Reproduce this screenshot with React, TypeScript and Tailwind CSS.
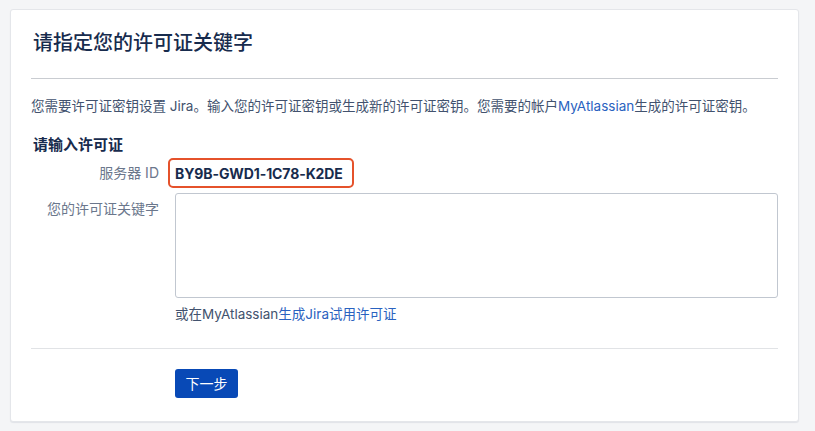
import React from 'react';

const font = "font-['Inter','Noto_Sans_CJK_SC',sans-serif]";

function FieldRow({ label, children, top }: { label: string; children: React.ReactNode; top?: boolean }) {
  return (
    <div className={`flex ${top ? 'items-start' : 'items-center'}`}>
      <label
        className={`w-[128px] shrink-0 text-right text-[14px] leading-[20px] text-[#6b778c] ${top ? 'pt-[6px]' : ''}`}
      >
        {label}
      </label>
      <div className="ml-4 flex-1">{children}</div>
    </div>
  );
}

export default function App() {
  return (
    <div className={`h-[431px] w-[815px] overflow-hidden bg-[#f4f5f7] pt-[9px] ${font}`}>
      <div className="ml-[10px] w-[789px] rounded-[3px] border border-[#e4e6ea] bg-white px-5 pt-[21px] pb-[23px] shadow-[0_1px_1px_rgba(9,30,66,0.08)]">
        <h1 className="pl-[2px] text-[20px] leading-[24px] font-medium text-[#172b4d]">请指定您的许可证关键字</h1>
        <div className="mt-[23px] h-px bg-[#c9ccd1]" />

        <p className="mt-[17px] text-[13.5px] leading-[20px] text-[#42526e]">
          您需要许可证密钥设置 Jira。输入您的许可证密钥或生成新的许可证密钥。您需要的帐户
          <a href="#" className="text-[#2a62c0]">MyAtlassian</a>
          生成的许可证密钥。
        </p>

        <h2 className="mt-[19px] pl-[2px] text-[15px] leading-[20px] font-semibold text-[#172b4d]">请输入许可证</h2>

        <div className="mt-[3px] flex flex-col gap-[5px]">
          <FieldRow label="服务器 ID">
            <span className="-ml-[7px] inline-flex h-[30px] w-[186px] items-center rounded-[5px] border-2 border-[#e5522b] pl-[5px] text-[14px] font-bold tracking-[-0.1px] text-[#172b4d]">
              BY9B-GWD1-1C78-K2DE
            </span>
          </FieldRow>
          <FieldRow label="您的许可证关键字" top>
            <textarea className="block h-[105px] w-full resize-none rounded-[3px] border border-[#c1c7d0] bg-white" />
          </FieldRow>
        </div>

        <div className="mt-[6px] pl-[144px] text-[13.5px] leading-[20px] text-[#42526e]">
          或在MyAtlassian
          <a href="#" className="text-[#2a62c0]">生成Jira试用许可证</a>
        </div>

        <div className="mt-[24px] h-px bg-[#e1e3e6]" />

        <div className="mt-[20px] pl-[144px]">
          <button className="h-[29px] w-[63px] rounded-[3px] bg-[#0849b6] text-[14px] text-white">下一步</button>
        </div>
      </div>
    </div>
  );
}
